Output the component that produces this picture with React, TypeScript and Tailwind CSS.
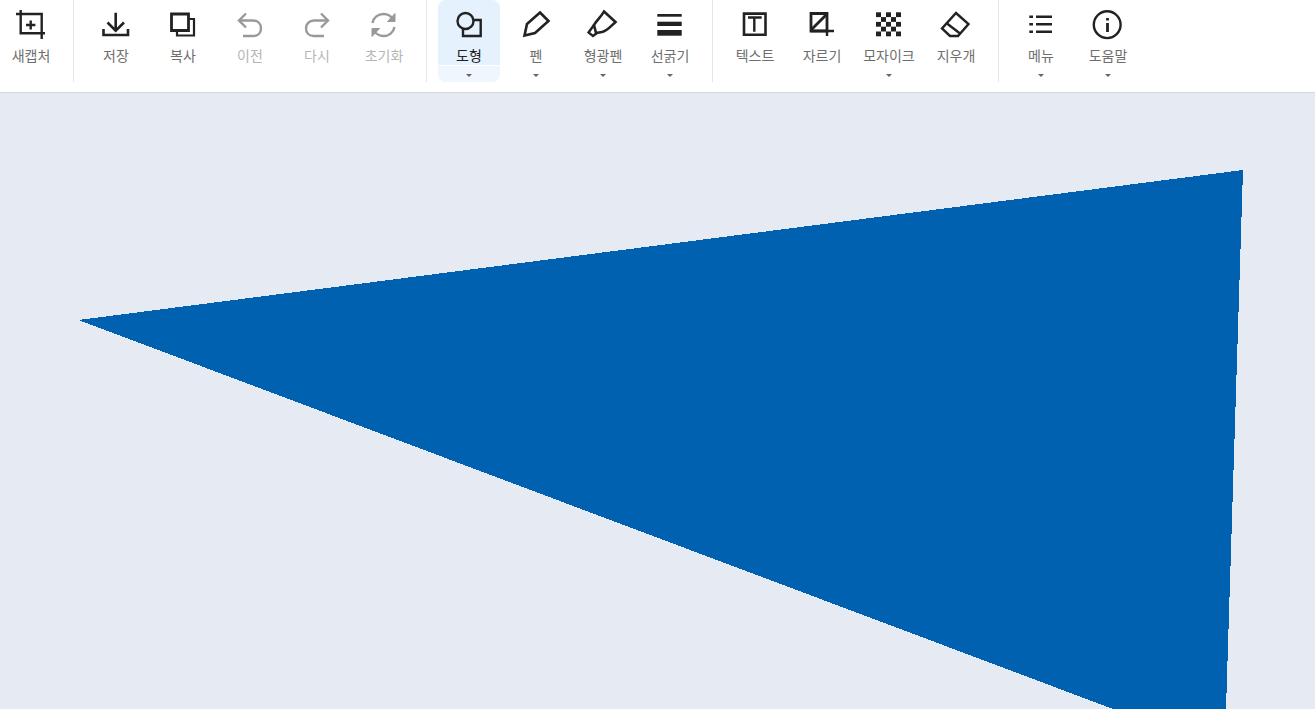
import type { ReactNode } from "react";

const S = ({ children }: { children: ReactNode }) => (
  <svg width="32" height="32" viewBox="0 0 32 32" fill="none" stroke="currentColor" strokeWidth="2.4" className="block">
    {children}
  </svg>
);

const icons: Record<string, ReactNode> = {
  capture: (
    <S>
      <path d="M1 5H26.700V30M5.700 1V24.300H30" />
      <path d="M11 16H20.400M15.700 11.500V20.500" />
    </S>
  ),
  save: (
    <S>
      <path d="M3.500 20V26H28V20M15.700 3.700V22.500M7.500 13.500L15.700 21.700L24 13.500" strokeWidth="2.600" />
    </S>
  ),
  copy: (
    <S>
      <path d="M4.500 5H21.500V21.500H4.500Z" strokeWidth="2.800" />
      <path d="M22 10H27V26.500H10V22" strokeWidth="2.200" />
    </S>
  ),
  undo: (
    <S>
      <path d="M12 4.500L5 11.500L12 18.500" />
      <path d="M5.500 11.500H19C24 11.500 27 15 27 19.500C27 24 24 27 19 27H9" />
    </S>
  ),
  redo: (
    <S>
      <path d="M20 4.500L27 11.500L20 18.500" />
      <path d="M26.500 11.500H13C8 11.500 5 15 5 19.500C5 24 8 27 13 27H23" />
    </S>
  ),
  reset: (
    <S>
      <path d="M4.500 14C5.500 8.500 10 5 15.500 5C20 5 23.500 7.500 25.500 11" />
      <path d="M26.500 18C25.500 23.500 21 27 15.500 27C11 27 7.500 24.500 5.500 21" />
      <path d="M27 4.500V12.500H19.500L27 4.500ZM4 27.500V19.500H11.500L4 27.500Z" fill="currentColor" strokeWidth="1" />
    </S>
  ),
  shape: (
    <S>
      <circle cx="12.500" cy="12" r="8" />
      <path d="M20.500 11H27.700V27H10V20" />
    </S>
  ),
  pen: (
    <S>
      <path d="M20 3.500L28.500 12L15 24L4.500 26.500L7 15L20 3.500Z" strokeWidth="2.600" />
    </S>
  ),
  marker: (
    <S>
      <path d="M17 2.500L28.500 13C24 17 20 22 15 23L9 24L7 16C9 12 14 8 17 2.500Z" strokeWidth="2.600" />
      <path d="M7 16L1.500 23.500L6 27L10 24" />
    </S>
  ),
  line: (
    <svg width="32" height="32" viewBox="0 0 32 32" fill="currentColor" className="block">
      <rect x="3.300" y="5" width="24.400" height="2.700" />
      <rect x="3.300" y="12.700" width="24.400" height="4.300" />
      <rect x="3.300" y="21" width="24.400" height="5.700" />
    </svg>
  ),
  text: (
    <S>
      <path d="M5 4.600H26.500V25.700H5Z" strokeWidth="2.600" />
      <path d="M9 8.500H22.700M15.300 8.500V22.700" />
    </S>
  ),
  crop: (
    <S>
      <path d="M5 22V4.500H21V22H5Z" strokeWidth="2.800" />
      <path d="M5 21L21 5" strokeWidth="2.800" />
      <path d="M5 22H28M21 22V27" />
    </S>
  ),
  mosaic: (
    <svg width="32" height="32" viewBox="0 0 32 32" fill="currentColor" className="block">
      {[0, 1, 2, 3, 4].flatMap((r) =>
        [0, 1, 2, 3, 4]
          .filter((c) => (r + c) % 2 === 0)
          .map((c) => <rect key={`${r}-${c}`} x={3 + c * 5} y={3.3 + r * 4.8} width="5" height="4.800" />),
      )}
    </svg>
  ),
  eraser: (
    <S>
      <path d="M16 4L28.500 15L18 27H10L2 19.500L16 4Z" />
      <path d="M7 14.500L20 24.500" />
    </S>
  ),
  menu: (
    <S>
      <path d="M11 7.700H27M11 15.300H27M11 22.700H27" />
      <path d="M4.300 7.700H8M4.300 15.300H8M4.300 22.700H8" />
    </S>
  ),
  info: (
    <S>
      <circle cx="15.200" cy="15.700" r="13.400" />
      <path d="M15.500 14V23M15.500 9V11.500" strokeWidth="2.800" />
    </S>
  ),
};

type Tool = { icon: string; label: string; caret?: boolean; off?: boolean; active?: boolean };

const groups: Tool[][] = [
  [{ icon: "capture", label: "새캡처" }],
  [
    { icon: "save", label: "저장" },
    { icon: "copy", label: "복사" },
    { icon: "undo", label: "이전", off: true },
    { icon: "redo", label: "다시", off: true },
    { icon: "reset", label: "초기화", off: true },
  ],
  [
    { icon: "shape", label: "도형", caret: true, active: true },
    { icon: "pen", label: "펜", caret: true },
    { icon: "marker", label: "형광펜", caret: true },
    { icon: "line", label: "선굵기", caret: true },
  ],
  [
    { icon: "text", label: "텍스트" },
    { icon: "crop", label: "자르기" },
    { icon: "mosaic", label: "모자이크", caret: true },
    { icon: "eraser", label: "지우개" },
  ],
  [
    { icon: "menu", label: "메뉴", caret: true },
    { icon: "info", label: "도움말", caret: true },
  ],
];

function ToolButton({ tool }: { tool: Tool }) {
  return (
    <button type="button" className="flex h-[82px] w-[62px] flex-col items-center">
      <span className={`flex h-[65px] w-full flex-col items-center rounded-t-lg pt-[9px] ${tool.active ? "bg-[#e5f1fc]" : ""}`}>
        <span className={tool.off ? "text-[#999999]" : "text-[#222222]"}>{icons[tool.icon]}</span>
        <span
          className={`mt-[5px] whitespace-nowrap text-[14px] leading-[18px] ${
            tool.active ? "text-[#222222]" : tool.off ? "text-[#b5b5b5]" : "text-[#6e6e6e]"
          }`}
        >
          {tool.label}
        </span>
      </span>
      <span className={`mt-px flex h-[16px] w-full justify-center rounded-b-lg pt-[8px] ${tool.active ? "bg-[#f0f6fd]" : ""}`}>
        {tool.caret && <span className="h-0 w-0 border-x-[3.5px] border-t-[3.5px] border-x-transparent border-t-[#666666]" />}
      </span>
    </button>
  );
}

export default function App() {
  return (
    <div className="flex h-[709px] w-full flex-col overflow-hidden bg-[#e6eaf2] font-['Noto_Sans_CJK_KR','Noto_Sans',sans-serif]">
      <header className="h-[93px] shrink-0 border-b border-[#d5d7da] bg-white">
        <div className="flex items-start">
          {groups.map((group, i) => (
            <div key={i} className={`flex gap-[5px] ${i > 0 ? "ml-[11px] border-l border-[#e6e6e6] pl-[11px]" : ""}`}>
              {group.map((tool) => (
                <ToolButton key={tool.label} tool={tool} />
              ))}
            </div>
          ))}
        </div>
      </header>
      <main className="min-h-0 flex-1">
        <svg width="1315" height="616" viewBox="0 0 1315 616" shapeRendering="crispEdges" className="block">
          <polygon points="78.500,227 1243,77 1226,616 1113,616" fill="#0061b1" />
        </svg>
      </main>
    </div>
  );
}
